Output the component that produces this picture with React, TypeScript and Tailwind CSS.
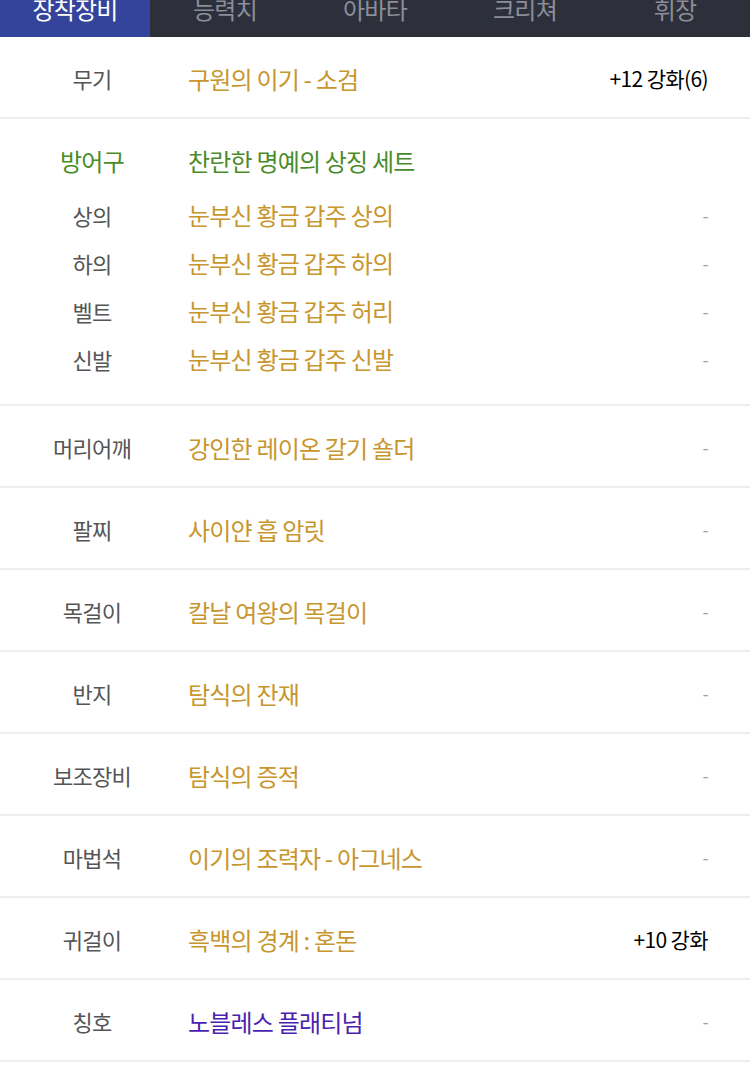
const tabs = ["장착장비", "능력치", "아바타", "크리쳐", "휘장"];

type Row = {
  label: string;
  name: string;
  value?: string;
  tone?: "gold" | "purple";
};

const armor: Row[] = [
  { label: "상의", name: "눈부신 황금 갑주 상의" },
  { label: "하의", name: "눈부신 황금 갑주 하의" },
  { label: "벨트", name: "눈부신 황금 갑주 허리" },
  { label: "신발", name: "눈부신 황금 갑주 신발" },
];

const rows: Row[] = [
  { label: "머리어깨", name: "강인한 레이온 갈기 숄더" },
  { label: "팔찌", name: "사이얀 흡 암릿" },
  { label: "목걸이", name: "칼날 여왕의 목걸이" },
  { label: "반지", name: "탐식의 잔재" },
  { label: "보조장비", name: "탐식의 증적" },
  { label: "마법석", name: "이기의 조력자 - 아그네스" },
  { label: "귀걸이", name: "흑백의 경계 : 혼돈", value: "+10 강화" },
  { label: "칭호", name: "노블레스 플래티넘", tone: "purple" },
];

function Value({ value }: { value?: string }) {
  return value ? (
    <span className="text-[21px] tracking-[-0.03em] text-black">{value}</span>
  ) : (
    <span className="text-[18px] text-[#a0a0a0]">-</span>
  );
}

function ItemRow({ row }: { row: Row }) {
  return (
    <div className="flex h-[82px] items-center border-b-2 border-[#eeeeee] pt-[3px]">
      <div className="w-[184px] text-center text-[22px] text-[#555555]">{row.label}</div>
      <div
        className={`ml-[4px] flex-1 text-[24px] ${row.tone === "purple" ? "text-[#4b1fb0]" : "text-[#c8962e]"}`}
      >
        {row.name}
      </div>
      <div className="pr-[42px]">
        <Value value={row.value} />
      </div>
    </div>
  );
}

export default function App() {
  return (
    <div
      className="min-h-[1085px] bg-white tracking-[-0.05em]"
      style={{ fontFamily: '"Noto Sans CJK KR", "Noto Sans", sans-serif' }}
    >
      <nav className="grid h-[37px] grid-cols-5 overflow-hidden bg-[#2d303b]">
        {tabs.map((tab, i) => (
          <div
            key={tab}
            className={`flex justify-center ${i === 0 ? "bg-[#34449a] text-white" : "text-[#8b8e97]"}`}
          >
            <span className="-mt-[6px] text-[24px] leading-[30px]">{tab}</span>
          </div>
        ))}
      </nav>

      <ItemRow row={{ label: "무기", name: "구원의 이기 - 소검", value: "+12 강화(6)" }} />

      <section className="border-b-2 border-[#eeeeee] pt-[18px] pb-[21px]">
        <div className="flex h-[48px] items-center text-[#4a8c2a]">
          <div className="w-[184px] text-center text-[24px]">방어구</div>
          <div className="ml-[4px] text-[24px]">찬란한 명예의 상징 세트</div>
        </div>
        <div className="mt-[6px]">
          {armor.map((row) => (
            <div key={row.label} className="flex h-[48px] items-center">
              <div className="w-[184px] text-center text-[22px] text-[#555555]">{row.label}</div>
              <div className="ml-[4px] flex-1 text-[24px] text-[#c8962e]">{row.name}</div>
              <div className="pr-[42px]">
                <Value />
              </div>
            </div>
          ))}
        </div>
      </section>

      {rows.map((row) => (
        <ItemRow key={row.label} row={row} />
      ))}
    </div>
  );
}
